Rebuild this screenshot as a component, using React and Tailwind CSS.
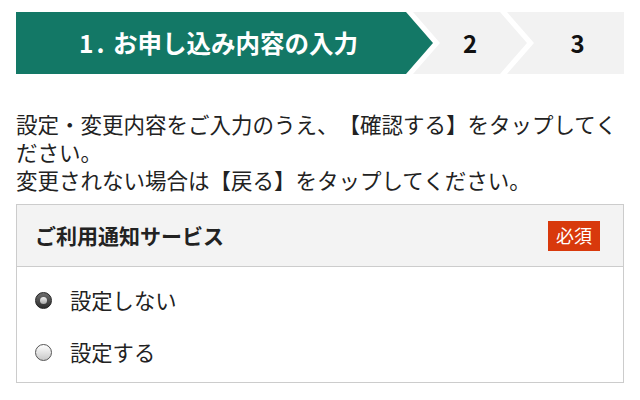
import React from "react";

const font = { fontFamily: '"Noto Sans CJK JP", "Noto Sans", sans-serif' };

function Radio({ checked }) {
  if (checked) {
    return (
      <span className="box-border flex h-[17px] w-[17px] shrink-0 items-center justify-center rounded-full border border-[#222] bg-[linear-gradient(180deg,#6e6e6e,#2e2e2e)]">
        <span className="h-[7px] w-[7px] rounded-full bg-[linear-gradient(180deg,#f4f4f4,#a8a8a8)]" />
      </span>
    );
  }
  return (
    <span className="box-border block h-[17px] w-[17px] shrink-0 rounded-full border border-[#555] bg-[linear-gradient(180deg,#ffffff,#c8c8c8)]" />
  );
}

export default function App() {
  return (
    <div className="min-h-[400px] w-[640px] bg-white text-[#222] [text-spacing-trim:space-all]" style={font}>
      <div className="mx-4 mt-3 flex h-[62px]">
        <div className="flex w-[417px] shrink-0 items-center bg-[#137866] pl-[63px] text-[24.5px] font-bold text-white [clip-path:polygon(0_0,390px_0,417px_50%,390px_100%,0_100%)]">
          <span className="inline-block w-[34px] tracking-[3px]">1.</span>
          <span>お申し込み内容の入力</span>
        </div>
        <div className="ml-[-20px] flex w-[114px] shrink-0 items-center justify-center bg-[#f2f2f2] px-[27px] text-[24px] font-bold text-[#111] [clip-path:polygon(0_0,87px_0,114px_50%,87px_100%,0_100%,27px_50%)]">
          2
        </div>
        <div className="ml-[-20px] flex flex-1 items-center justify-center bg-[#f2f2f2] pl-[24px] text-[24px] font-bold text-[#111] [clip-path:polygon(0_0,100%_0,100%_100%,0_100%,27px_50%)]">
          3
        </div>
      </div>

      <p className="mt-[36px] px-4 text-[21.5px] leading-[28px]">
        設定・変更内容をご入力のうえ、【確認する】をタップしてください。
        <br />
        変更されない場合は【戻る】をタップしてください。
      </p>

      <div className="mx-4 mt-[10px] border border-[#cccccc]">
        <div className="flex h-[62px] items-center justify-between border-b border-[#cccccc] bg-[#f3f3f3] pl-[18px] pr-[23px]">
          <span className="text-[21px] font-bold text-[#222]">ご利用通知サービス</span>
          <span className="flex h-[30px] w-[52px] items-center justify-center bg-[#d8390c] text-[18px] text-white">
            必須
          </span>
        </div>
        <div className="pb-[4px] pt-[7px]">
          <div className="flex h-[52px] items-center gap-[18px] pl-[18px]">
            <Radio checked />
            <span className="text-[21.3px] text-[#222]">設定しない</span>
          </div>
          <div className="flex h-[52px] items-center gap-[18px] pl-[18px]">
            <Radio />
            <span className="text-[21.3px] text-[#222]">設定する</span>
          </div>
        </div>
      </div>
    </div>
  );
}
